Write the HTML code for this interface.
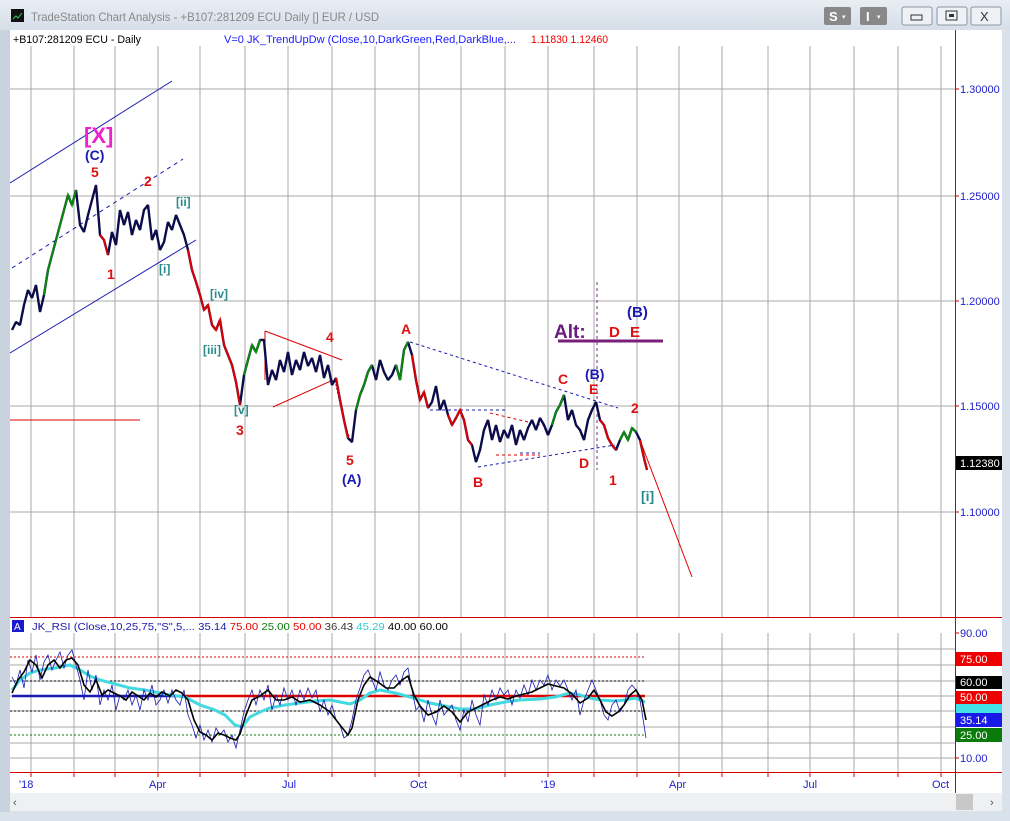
<!DOCTYPE html>
<html><head><meta charset="utf-8"><style>
body{margin:0;width:1010px;height:821px;overflow:hidden;background:#dfe6ee;font-family:"Liberation Sans",sans-serif;}
svg{position:absolute;left:0;top:0}
text{font-family:"Liberation Sans",sans-serif}
.lab{font-weight:bold;font-size:14px}
</style></head><body>
<svg width="1010" height="821" viewBox="0 0 1010 821">
<defs><linearGradient id="tb" x1="0" y1="0" x2="0" y2="1"><stop offset="0" stop-color="#e9eef4"/><stop offset="1" stop-color="#d6dee8"/></linearGradient></defs>
<rect x="0" y="0" width="1010" height="821" fill="#d9e1ea"/>
<rect x="0" y="0" width="1010" height="30" fill="url(#tb)"/>
<rect x="11" y="9" width="13" height="13" fill="#111"/><path d="M13 19 l3-3 2 2 4-5" stroke="#3c6" fill="none" stroke-width="1"/>
<text x="31" y="21" font-size="12" fill="#888" textLength="348" lengthAdjust="spacingAndGlyphs">TradeStation Chart Analysis - +B107:281209 ECU Daily [] EUR / USD</text>
<rect x="824" y="7" width="27" height="18" rx="2" fill="#888"/><text x="829" y="21" font-size="13" font-weight="bold" fill="#fff">S</text><text x="842" y="19" font-size="7" fill="#fff">▾</text>
<rect x="860" y="7" width="27" height="18" rx="2" fill="#888"/><text x="866" y="21" font-size="13" font-weight="bold" fill="#fff">I</text><text x="877" y="19" font-size="7" fill="#fff">▾</text>
<rect x="902" y="7" width="30" height="18" rx="2" fill="#eef1f5" stroke="#8a96a4"/><rect x="911" y="15" width="11" height="5" fill="none" stroke="#333"/>
<rect x="937" y="7" width="30" height="18" rx="2" fill="#eef1f5" stroke="#8a96a4"/><rect x="946" y="11" width="11" height="9" fill="none" stroke="#333"/><rect x="949" y="14" width="5" height="3" fill="#333"/>
<rect x="971" y="7" width="30" height="18" rx="2" fill="#eef1f5" stroke="#8a96a4"/><text x="980" y="21" font-size="13" fill="#333">X</text>
<rect x="10" y="30" width="992" height="763" fill="#fff"/>
<rect x="0" y="30" width="10" height="791" fill="#c9d3de"/>
<g stroke="#a8a8a8" stroke-width="1">
<path d="M31 46V617M74 46V617M115 46V617M158 46V617M200 46V617M245 46V617M288 46V617M332 46V617M375 46V617M419 46V617M461 46V617M505 46V617M548 46V617M594 46V617M637 46V617M679 46V617M722 46V617M768 46V617M810 46V617M854 46V617M898 46V617M941 46V617"/>
<path d="M10 89H955M10 196H955M10 301H955M10 406H955M10 512H955"/>
<path d="M31 633V772M74 633V772M115 633V772M158 633V772M200 633V772M245 633V772M288 633V772M332 633V772M375 633V772M419 633V772M461 633V772M505 633V772M548 633V772M594 633V772M637 633V772M679 633V772M722 633V772M768 633V772M810 633V772M854 633V772M898 633V772M941 633V772"/>
<path d="M10 649H955M10 665H955M10 681H955M10 696H955M10 711H955M10 727H955M10 743H955M10 758H955"/>
</g>
<g stroke="#d00000" stroke-width="1" fill="none">
<rect x="955" y="30" width="1" height="763" fill="#d00000" stroke="none"/><path d="M10 617.5H1002M10 772.5H1002"/>
<path d="M955 89h4M955 196h4M955 301h4M955 406h4M955 512h4M955 633h4M955 758h4"/>
<path d="M31 772v5M74 772v5M115 772v5M158 772v5M200 772v5M245 772v5M288 772v5M332 772v5M375 772v5M419 772v5M461 772v5M505 772v5M548 772v5M594 772v5M637 772v5M679 772v5M722 772v5M768 772v5M810 772v5M854 772v5M898 772v5M941 772v5"/>
</g>
<text x="13" y="43" font-size="11" fill="#000" textLength="128" lengthAdjust="spacingAndGlyphs">+B107:281209 ECU - Daily</text>
<text x="224" y="43" font-size="11" fill="#1a1aff" textLength="292" lengthAdjust="spacingAndGlyphs">V=0  JK_TrendUpDw (Close,10,DarkGreen,Red,DarkBlue,...</text>
<text x="531" y="43" font-size="11" fill="#e00" textLength="77" lengthAdjust="spacingAndGlyphs">1.11830  1.12460</text>
<g font-size="11" fill="#2222cc"><text x="960" y="93">1.30000</text><text x="960" y="200">1.25000</text><text x="960" y="305">1.20000</text><text x="960" y="410">1.15000</text><text x="960" y="516">1.10000</text><text x="960" y="637">90.00</text><text x="960" y="762">10.00</text></g>
<rect x="956" y="456" width="46" height="14" fill="#000"/><text x="960" y="467" font-size="11" fill="#fff">1.12380</text>
<g fill="none" stroke="#1a1ab0" stroke-width="1">
<path d="M10 183L172 81"/><path d="M10 353L196 240"/><path d="M12 268L183 159" stroke-dasharray="4 4"/>
<path d="M410 342L618 408M478 467L615 445" stroke-dasharray="3 3"/>
<path d="M430 410H505M520 453H540" stroke-dasharray="3 3"/>
</g>
<g fill="none" stroke="#d00" stroke-width="1">
<path d="M10 420H140"/><path d="M265 331L342 360M273 407L333 380M265 331V380"/>
<path d="M640 440L692 577"/><path d="M335 380Q345 430 352 443" stroke-dasharray="2 2"/>
<path d="M490 413L545 426M496 455H540" stroke-dasharray="3 3"/>
</g>
<path d="M597 282V470" stroke="#7a2a8a" stroke-dasharray="3 3" fill="none"/>
<path d="M558 341H663" stroke="#7a1f7a" stroke-width="3"/>
<polyline fill="none" stroke="#0c0c4a" stroke-width="2.4" stroke-linejoin="bevel" points="12,330 16,322 20,325 24,305 28,290 32,298 36,285 40,312 44,295 48,270 52,255 56,240 60,225 64,210 68,195 72,205 76,190 80,225 84,232 88,215 92,200 96,185 100,235 104,240 108,255 112,232 116,245 120,210 124,225 128,212 132,235 136,220 140,230 144,210 148,205 152,240 156,230 160,250 164,242 168,222 172,230 176,215 180,225 184,235 188,250 192,270 196,282 200,295 204,310 208,305 212,325 216,330 220,320 224,345 228,355 232,365 236,382 240,405 244,375 248,360 252,345 256,352 260,340 264,340 268,385 272,370 276,380 280,360 284,372 288,352 292,375 296,360 300,370 304,352 308,366 312,358 316,372 320,355 324,378 328,365 332,385 336,378 340,400 344,420 348,438 352,442 356,410 360,395 364,385 368,372 372,365 376,380 380,360 384,372 388,380 392,375 396,365 400,380 404,350 408,342 412,355 416,380 420,400 424,392 428,408 432,402 436,386 440,410 444,400 448,415 452,425 456,418 460,410 464,420 468,440 472,445 476,462 480,450 484,430 488,420 492,440 496,425 500,442 504,430 508,438 512,425 516,445 520,430 524,440 528,428 532,420 536,430 540,418 544,425 548,435 552,425 556,412 560,405 564,395 568,420 572,410 576,425 580,430 584,440 588,420 592,410 596,402 600,420 604,425 608,438 612,445 616,450 620,440 624,432 628,440 632,428 636,432 640,440 644,458 647,470"/>
<g fill="none" stroke="#0a8a0a" stroke-width="2">
<polyline points="44,295 48,270 52,255 56,240 60,225 64,210 68,195 72,205 76,190"/>
<polyline points="356,410 360,395 364,385 368,372 372,365"/><polyline points="396,365 400,380 404,350 408,342"/>
<polyline points="552,425 556,412 560,405 564,395"/><polyline points="620,440 624,432 628,440 632,428 636,432"/>
<polyline points="244,375 248,360 252,345 256,352 260,340"/>
</g>
<g fill="none" stroke="#d00" stroke-width="2">
<polyline points="188,250 192,270 196,282 200,295 204,310 208,305 212,325 216,330 220,320 224,345 228,355 232,365 236,382 240,405"/>
<polyline points="412,355 416,380 420,400 424,392 428,408"/><polyline points="448,415 452,425 456,418 460,410 464,420 468,440 472,445"/>
<polyline points="600,420 604,425 608,438 612,445 616,450"/><polyline points="640,440 644,458 647,470"/><polyline points="336,378 340,400 344,420 348,438"/>
<polyline points="100,235 104,240 108,255"/>
</g>
<text x="84" y="143" font-size="22" font-weight="bold" fill="#ee22cc">[X]</text>
<text class="lab" x="85" y="160" fill="#1a1ab0">(C)</text>
<g class="lab" fill="#e01010">
<text x="91" y="177">5</text><text x="144" y="186">2</text><text x="107" y="279">1</text><text x="236" y="435">3</text><text x="326" y="342">4</text><text x="346" y="465">5</text>
<text x="401" y="334">A</text><text x="473" y="487">B</text><text x="558" y="384">C</text><text x="589" y="394">E</text><text x="579" y="468">D</text><text x="609" y="485">1</text><text x="631" y="413">2</text>
<text x="609" y="337" font-size="15">D</text><text x="630" y="337" font-size="15">E</text>
</g>
<g class="lab" fill="#1a1ab0"><text x="342" y="484">(A)</text><text x="585" y="379">(B)</text><text x="627" y="317" font-size="15">(B)</text></g>
<g font-size="12" font-weight="bold" fill="#2a8a8a"><text x="176" y="206">[ii]</text><text x="159" y="273">[i]</text><text x="210" y="298">[iv]</text><text x="203" y="354">[iii]</text><text x="234" y="414">[v]</text><text x="641" y="501" font-size="14">[i]</text></g>
<text x="554" y="338" font-size="19" font-weight="bold" fill="#6a1a7a">Alt:</text>
<rect x="12" y="620" width="12" height="12" fill="#1a1ad0"/><text x="14" y="630" font-size="10" fill="#fff">A</text>
<text x="32" y="630" font-size="10.5" textLength="416" lengthAdjust="spacingAndGlyphs"><tspan fill="#1a1ab0">JK_RSI (Close,10,25,75,"S",5,...  35.14  </tspan><tspan fill="#e00">75.00  </tspan><tspan fill="#0a7a0a">25.00  </tspan><tspan fill="#e00">50.00  </tspan><tspan fill="#333">36.43  </tspan><tspan fill="#3cc">45.29  </tspan><tspan fill="#000">40.00  60.00</tspan></text>
<g fill="none" stroke-width="1">
<path d="M10 657H645" stroke="#d00" stroke-dasharray="2 2"/><path d="M10 681H645M10 711H645" stroke="#000" stroke-dasharray="2 2"/><path d="M10 735H645" stroke="#0a7a0a" stroke-dasharray="2 2"/>
</g>
<path d="M12 696H180" stroke="#1a1ab0" stroke-width="2.5"/><path d="M180 696H645" stroke="#d00" stroke-width="2.5"/>
<polyline fill="none" stroke="#44d8e0" stroke-width="3" points="12,690 20,680 30,673 40,670 55,668 70,665 80,670 90,676 100,680 115,684 130,688 145,690 160,693 170,695 185,697 200,705 215,710 225,715 235,725 242,727 250,717 260,712 270,708 285,705 300,703 315,701 330,700 340,702 350,704 360,700 370,693 380,690 395,693 410,697 420,700 430,703 445,706 460,709 475,709 490,705 505,702 520,700 540,699 555,697 570,693 580,695 590,698 600,700 615,701 625,700 635,698 645,702"/>
<polyline fill="none" stroke="#1a1ab0" stroke-width="0.8" points="12,677 16,685 20,670 24,688 28,660 32,672 36,655 40,680 44,662 48,655 52,670 56,660 60,652 64,668 68,655 72,650 76,665 80,680 84,700 88,670 92,690 96,675 100,705 104,690 108,700 112,685 116,710 120,695 124,700 128,690 132,705 136,695 140,710 144,690 148,700 152,685 156,705 160,700 164,690 168,703 172,690 176,700 180,705 184,690 188,715 192,725 196,738 200,725 204,740 208,730 212,742 216,728 220,735 224,730 228,742 232,735 236,748 240,730 244,712 248,700 252,690 256,705 260,690 264,700 268,685 272,710 276,695 280,705 284,688 288,700 292,690 296,705 300,690 304,700 308,688 312,698 316,690 320,712 324,700 328,715 332,705 336,720 340,725 344,738 348,735 352,720 356,700 360,688 364,675 368,670 372,680 376,690 380,672 384,685 388,690 392,680 396,675 400,685 404,672 408,668 412,690 416,710 420,705 424,722 428,700 432,715 436,725 440,700 444,715 448,710 452,705 456,720 460,730 464,710 468,722 472,700 476,715 480,725 484,695 488,705 492,690 496,700 500,688 504,695 508,690 512,705 516,690 520,698 524,685 528,695 532,680 536,690 540,680 544,685 548,675 552,690 556,680 560,686 564,680 568,690 572,700 576,690 580,715 584,700 588,690 592,680 596,690 600,700 604,715 608,720 612,705 616,700 620,712 624,705 628,690 632,685 636,690 640,700 644,725 646,738"/>
<polyline fill="none" stroke="#000" stroke-width="1.6" points="12,693 18,680 24,672 30,660 36,665 42,678 48,665 54,660 60,668 66,660 72,658 78,665 84,685 90,692 96,680 102,695 108,690 114,693 120,696 126,700 132,692 138,696 144,700 150,693 156,697 162,692 170,696 176,690 182,693 188,700 194,720 200,732 206,735 212,740 218,733 224,735 230,738 236,740 240,734 246,715 252,700 260,696 268,690 276,700 284,700 292,697 300,702 310,700 320,705 330,712 340,725 348,735 352,728 358,700 364,685 370,677 378,682 386,688 394,688 402,680 408,676 414,695 420,706 428,715 436,712 444,706 452,712 460,722 468,712 476,708 484,704 492,700 500,697 508,699 516,696 524,694 532,692 540,688 548,684 556,686 564,688 572,694 580,703 588,698 594,690 600,700 606,712 612,716 618,712 624,705 630,695 636,690 642,700 646,720"/>
<g font-size="11">
<rect x="956" y="652" width="46" height="14" fill="#e00"/><text x="960" y="663" fill="#fff">75.00</text>
<rect x="956" y="676" width="46" height="13" fill="#000"/><text x="960" y="686" fill="#fff">60.00</text>
<rect x="956" y="691" width="46" height="13" fill="#e00"/><text x="960" y="701" fill="#fff">50.00</text>
<rect x="956" y="704" width="46" height="9" fill="#44e0e8"/>
<rect x="956" y="713" width="46" height="14" fill="#1a1ae8"/><text x="960" y="724" fill="#fff">35.14</text>
<rect x="956" y="728" width="46" height="14" fill="#0a7a0a"/><text x="960" y="739" fill="#fff">25.00</text>
</g>
<g font-size="11" fill="#2222cc"><text x="19" y="788">'18</text><text x="149" y="788">Apr</text><text x="282" y="788">Jul</text><text x="410" y="788">Oct</text><text x="541" y="788">'19</text><text x="669" y="788">Apr</text><text x="803" y="788">Jul</text><text x="932" y="788">Oct</text></g>
<rect x="10" y="793" width="992" height="18" fill="#eef0f2"/>
<text x="13" y="806" font-size="11" fill="#555">‹</text><text x="990" y="806" font-size="11" fill="#555">›</text>
<rect x="956" y="794" width="17" height="16" fill="#c8c8c8"/>
<rect x="0" y="812" width="1010" height="9" fill="#d9e1ea"/>
</svg>
</body></html>
